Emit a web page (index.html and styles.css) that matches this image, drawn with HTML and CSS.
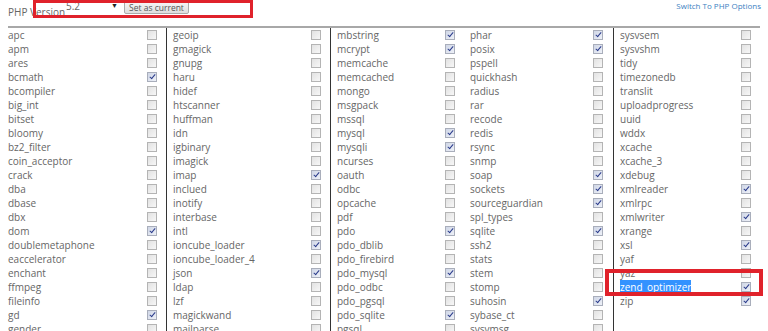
FILE: index.html
```html
<!DOCTYPE html>
<html>
<head>
    <title>PHP Extensions</title>
    <meta name="viewport" content="width=device-width,initial-scale=1">
    <link rel="stylesheet" href="styles.css">
</head>
<body>
<div class="page">
    <!-- 버전 선택 줄 -->
    <div class="head">
        <span class="ver-label">PHP Version</span>
        <div class="ver-select"><span>5.2</span><span class="arrow">&#9660;</span></div>
        <button class="btn">Set as current</button>
        <a class="switch" href="#">Switch To PHP Options</a>
        <div class="mark mark-head"></div>
    </div>

    <!-- 확장 목록 -->
    <div class="grid">
        <div class="col c1">
            <div class="row"><span>apc</span><i class="cb"></i></div>
            <div class="row"><span>apm</span><i class="cb"></i></div>
            <div class="row"><span>ares</span><i class="cb"></i></div>
            <div class="row"><span>bcmath</span><i class="cb on"></i></div>
            <div class="row"><span>bcompiler</span><i class="cb"></i></div>
            <div class="row"><span>big_int</span><i class="cb"></i></div>
            <div class="row"><span>bitset</span><i class="cb"></i></div>
            <div class="row"><span>bloomy</span><i class="cb"></i></div>
            <div class="row"><span>bz2_filter</span><i class="cb"></i></div>
            <div class="row"><span>coin_acceptor</span><i class="cb"></i></div>
            <div class="row"><span>crack</span><i class="cb"></i></div>
            <div class="row"><span>dba</span><i class="cb"></i></div>
            <div class="row"><span>dbase</span><i class="cb"></i></div>
            <div class="row"><span>dbx</span><i class="cb"></i></div>
            <div class="row"><span>dom</span><i class="cb on"></i></div>
            <div class="row"><span>doublemetaphone</span><i class="cb"></i></div>
            <div class="row"><span>eaccelerator</span><i class="cb"></i></div>
            <div class="row"><span>enchant</span><i class="cb"></i></div>
            <div class="row"><span>ffmpeg</span><i class="cb"></i></div>
            <div class="row"><span>fileinfo</span><i class="cb"></i></div>
            <div class="row"><span>gd</span><i class="cb on"></i></div>
            <div class="row"><span>gender</span><i class="cb"></i></div>
        </div>
        <div class="col c2">
            <div class="row"><span>geoip</span><i class="cb"></i></div>
            <div class="row"><span>gmagick</span><i class="cb"></i></div>
            <div class="row"><span>gnupg</span><i class="cb"></i></div>
            <div class="row"><span>haru</span><i class="cb"></i></div>
            <div class="row"><span>hidef</span><i class="cb"></i></div>
            <div class="row"><span>htscanner</span><i class="cb"></i></div>
            <div class="row"><span>huffman</span><i class="cb"></i></div>
            <div class="row"><span>idn</span><i class="cb"></i></div>
            <div class="row"><span>igbinary</span><i class="cb"></i></div>
            <div class="row"><span>imagick</span><i class="cb"></i></div>
            <div class="row"><span>imap</span><i class="cb on"></i></div>
            <div class="row"><span>inclued</span><i class="cb"></i></div>
            <div class="row"><span>inotify</span><i class="cb"></i></div>
            <div class="row"><span>interbase</span><i class="cb"></i></div>
            <div class="row"><span>intl</span><i class="cb"></i></div>
            <div class="row"><span>ioncube_loader</span><i class="cb on"></i></div>
            <div class="row"><span>ioncube_loader_4</span><i class="cb"></i></div>
            <div class="row"><span>json</span><i class="cb on"></i></div>
            <div class="row"><span>ldap</span><i class="cb"></i></div>
            <div class="row"><span>lzf</span><i class="cb"></i></div>
            <div class="row"><span>magickwand</span><i class="cb"></i></div>
            <div class="row"><span>mailparse</span><i class="cb"></i></div>
        </div>
        <div class="col c3">
            <div class="row"><span>mbstring</span><i class="cb on"></i></div>
            <div class="row"><span>mcrypt</span><i class="cb on"></i></div>
            <div class="row"><span>memcache</span><i class="cb"></i></div>
            <div class="row"><span>memcached</span><i class="cb"></i></div>
            <div class="row"><span>mongo</span><i class="cb"></i></div>
            <div class="row"><span>msgpack</span><i class="cb"></i></div>
            <div class="row"><span>mssql</span><i class="cb"></i></div>
            <div class="row"><span>mysql</span><i class="cb on"></i></div>
            <div class="row"><span>mysqli</span><i class="cb on"></i></div>
            <div class="row"><span>ncurses</span><i class="cb"></i></div>
            <div class="row"><span>oauth</span><i class="cb"></i></div>
            <div class="row"><span>odbc</span><i class="cb"></i></div>
            <div class="row"><span>opcache</span><i class="cb"></i></div>
            <div class="row"><span>pdf</span><i class="cb"></i></div>
            <div class="row"><span>pdo</span><i class="cb on"></i></div>
            <div class="row"><span>pdo_dblib</span><i class="cb"></i></div>
            <div class="row"><span>pdo_firebird</span><i class="cb"></i></div>
            <div class="row"><span>pdo_mysql</span><i class="cb on"></i></div>
            <div class="row"><span>pdo_odbc</span><i class="cb"></i></div>
            <div class="row"><span>pdo_pgsql</span><i class="cb"></i></div>
            <div class="row"><span>pdo_sqlite</span><i class="cb on"></i></div>
            <div class="row"><span>pgsql</span><i class="cb"></i></div>
        </div>
        <div class="col c4">
            <div class="row"><span>phar</span><i class="cb on"></i></div>
            <div class="row"><span>posix</span><i class="cb on"></i></div>
            <div class="row"><span>pspell</span><i class="cb"></i></div>
            <div class="row"><span>quickhash</span><i class="cb"></i></div>
            <div class="row"><span>radius</span><i class="cb"></i></div>
            <div class="row"><span>rar</span><i class="cb"></i></div>
            <div class="row"><span>recode</span><i class="cb"></i></div>
            <div class="row"><span>redis</span><i class="cb"></i></div>
            <div class="row"><span>rsync</span><i class="cb"></i></div>
            <div class="row"><span>snmp</span><i class="cb"></i></div>
            <div class="row"><span>soap</span><i class="cb on"></i></div>
            <div class="row"><span>sockets</span><i class="cb on"></i></div>
            <div class="row"><span>sourceguardian</span><i class="cb on"></i></div>
            <div class="row"><span>spl_types</span><i class="cb"></i></div>
            <div class="row"><span>sqlite</span><i class="cb on"></i></div>
            <div class="row"><span>ssh2</span><i class="cb"></i></div>
            <div class="row"><span>stats</span><i class="cb"></i></div>
            <div class="row"><span>stem</span><i class="cb"></i></div>
            <div class="row"><span>stomp</span><i class="cb"></i></div>
            <div class="row"><span>suhosin</span><i class="cb on"></i></div>
            <div class="row"><span>sybase_ct</span><i class="cb"></i></div>
            <div class="row"><span>sysvmsg</span><i class="cb"></i></div>
        </div>
        <div class="col c5">
            <div class="row"><span>sysvsem</span><i class="cb"></i></div>
            <div class="row"><span>sysvshm</span><i class="cb"></i></div>
            <div class="row"><span>tidy</span><i class="cb"></i></div>
            <div class="row"><span>timezonedb</span><i class="cb"></i></div>
            <div class="row"><span>translit</span><i class="cb"></i></div>
            <div class="row"><span>uploadprogress</span><i class="cb"></i></div>
            <div class="row"><span>uuid</span><i class="cb"></i></div>
            <div class="row"><span>wddx</span><i class="cb"></i></div>
            <div class="row"><span>xcache</span><i class="cb"></i></div>
            <div class="row"><span>xcache_3</span><i class="cb"></i></div>
            <div class="row"><span>xdebug</span><i class="cb"></i></div>
            <div class="row"><span>xmlreader</span><i class="cb on"></i></div>
            <div class="row"><span>xmlrpc</span><i class="cb"></i></div>
            <div class="row"><span>xmlwriter</span><i class="cb on"></i></div>
            <div class="row"><span>xrange</span><i class="cb"></i></div>
            <div class="row"><span>xsl</span><i class="cb on"></i></div>
            <div class="row"><span>yaf</span><i class="cb"></i></div>
            <div class="row"><span>yaz</span><i class="cb"></i></div>
            <div class="row marked"><span class="sel">zend_optimizer</span><i class="cb on"></i></div>
            <div class="row"><span>zip</span><i class="cb on"></i></div>
        </div>
    </div>
</div>
</body>
</html>
```

FILE: styles.css
```css
body {
    margin: 0;
    background: #fff;
    font-family: "Open Sans", "Liberation Sans", sans-serif;
    font-size: 10px;
    color: #666;
    overflow: hidden;
}

.page {
    padding: 0 8px;
}

/* 상단 버전 선택 */
.head {
    position: relative;
    display: flex;
    align-items: flex-start;
    height: 26px;
}

.ver-label {
    width: 58px;
    margin-top: 5px;
    line-height: 14px;
}

.ver-select {
    display: flex;
    justify-content: space-between;
    width: 52px;
    padding: 0 4px 0 0;
    line-height: 12px;
    color: #666;
}

.ver-select .arrow {
    font-size: 7px;
    color: #222;
}

.btn {
    margin-left: 2px;
    margin-top: 1px;
    height: 13px;
    padding: 0 4px;
    font-family: inherit;
    font-size: 8.5px;
    line-height: 11px;
    color: #555;
    background: linear-gradient(#f6f6f6, #dedede);
    border: 1px solid #aaa;
    border-radius: 2px;
}

.switch {
    margin-left: auto;
    margin-top: 0;
    margin-right: -1px;
    line-height: 12px;
    font-size: 8px;
    color: #3d7fc1;
    text-decoration: none;
}

.mark {
    position: absolute;
    border: 3px solid #e0222b;
}

.mark-head {
    left: 25px;
    top: 0;
    width: 214px;
    height: 12px;
}

/* 확장 목록 */
.grid {
    display: grid;
    grid-template-columns: 158px 164px 134px 149px 147px;
    border-top: 2px solid #a8a8a8;
    height: 310px;
}

.col {
    padding-left: 6px;
}

.c1 {
    padding-left: 0;
}

.c2,
.c3,
.c5 {
    border-left: 1px solid #333;
}

.row {
    display: flex;
    align-items: center;
    justify-content: space-between;
    height: 14px;
    padding-right: 9px;
    white-space: nowrap;
}

.c4 .row {
    padding-right: 10px;
}

.cb {
    width: 8px;
    height: 8px;
    border: 1px solid #b4b4b4;
    background: linear-gradient(135deg, #e2e2e2, #f7f7f7);
    position: relative;
}

.cb.on {
    background: linear-gradient(135deg, #cfd6e6, #eef1f8);
    border-color: #a9aebb;
}

.cb.on::after {
    content: "";
    position: absolute;
    left: 2.5px;
    top: 0;
    width: 2px;
    height: 5px;
    border-right: 1.5px solid #2b3c8c;
    border-bottom: 1.5px solid #2b3c8c;
    transform: rotate(40deg);
}

.sel {
    background: #3392ff;
    color: #fff;
}

.marked {
    position: relative;
}

.marked::before {
    content: "";
    position: absolute;
    left: -15px;
    right: -3px;
    top: -11px;
    bottom: -2px;
    border: 4px solid #e0222b;
}
```
